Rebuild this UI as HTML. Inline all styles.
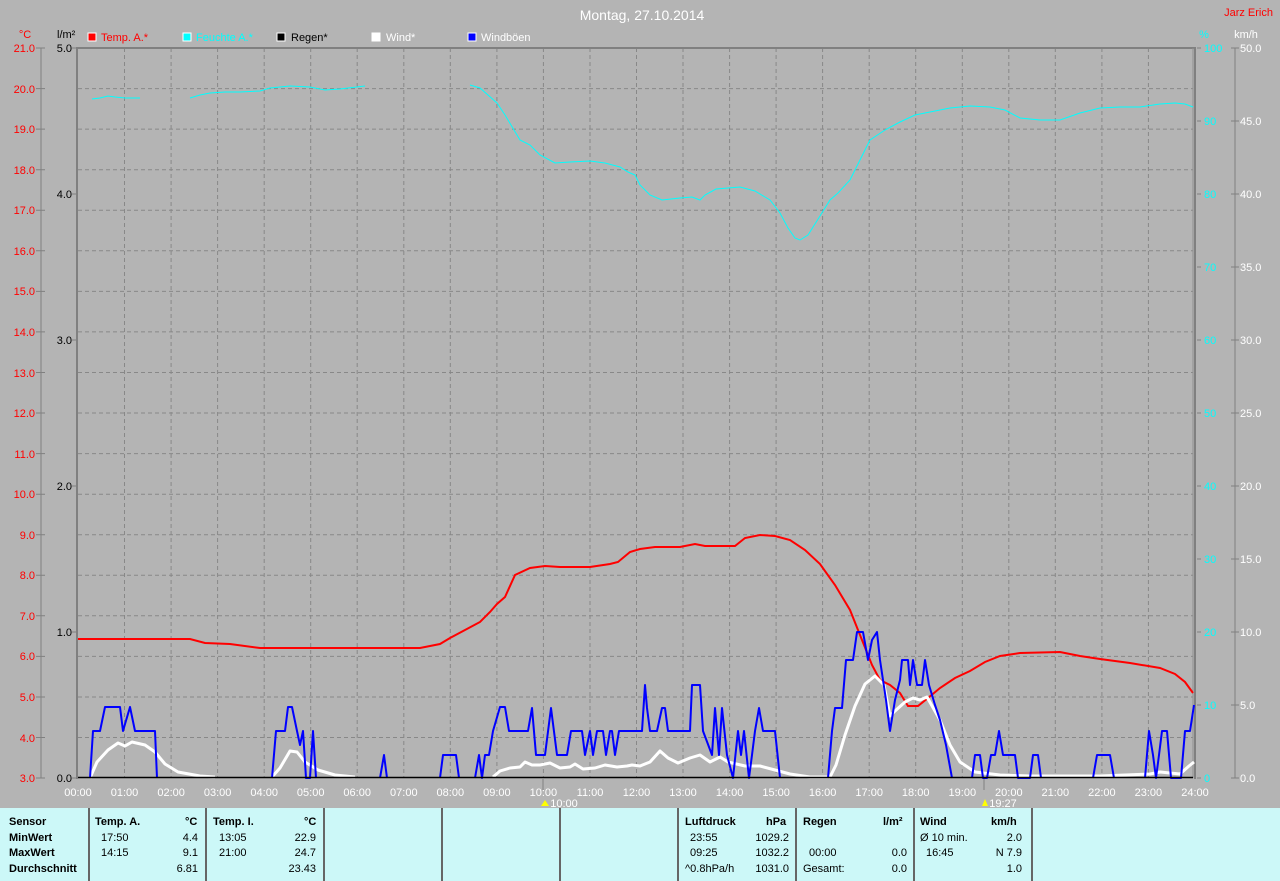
<!DOCTYPE html>
<html><head><meta charset="utf-8"><style>
html,body{margin:0;padding:0;background:#b4b4b4;}
body{width:1280px;height:881px;position:relative;overflow:hidden;font-family:"Liberation Sans",sans-serif;font-size:11px;}
svg{position:absolute;left:0;top:0;}
.tbl{position:absolute;left:0;top:808px;width:1280px;height:73px;background:#ccf8f8;}
.c{position:absolute;top:0;height:73px;border-left:2px solid #666;}
.t{position:absolute;font-size:11px;color:#000;white-space:nowrap;}
.b{font-weight:bold;}
</style></head><body>
<svg width="1280" height="808" viewBox="0 0 1280 808" font-family="Liberation Sans, sans-serif" font-size="11">
<text x="642" y="20" fill="#ffffff" font-size="14" text-anchor="middle">Montag, 27.10.2014</text>
<text x="1273" y="16" fill="#ff0000" text-anchor="end">Jarz Erich</text>
<text x="25" y="38" fill="#ff0000" text-anchor="middle">°C</text>
<text x="57" y="38" fill="#000">l/m²</text>
<text x="1204" y="38" fill="#00ffff" text-anchor="middle">%</text>
<text x="1246" y="38" fill="#fff" text-anchor="middle">km/h</text>
<rect x="88" y="33" width="8" height="8" fill="#f00" stroke="#fff"/><text x="101" y="41" fill="#f00">Temp. A.*</text>
<rect x="183" y="33" width="8" height="8" fill="#0ff" stroke="#fff"/><text x="196" y="41" fill="#0ff">Feuchte A.*</text>
<rect x="277" y="33" width="8" height="8" fill="#000" stroke="#fff"/><text x="291" y="41" fill="#000">Regen*</text>
<rect x="372" y="33" width="8" height="8" fill="#fff" stroke="#fff"/><text x="386" y="41" fill="#fff">Wind*</text>
<rect x="468" y="33" width="8" height="8" fill="#00f" stroke="#fff"/><text x="481" y="41" fill="#fff">Windböen</text>
<g stroke="#888" stroke-dasharray="4,3" stroke-width="1">
<path d="M124.5 48V778M171.1 48V778M217.6 48V778M264.2 48V778M310.7 48V778M357.2 48V778M403.8 48V778M450.3 48V778M496.9 48V778M543.4 48V778M590 48V778M636.5 48V778M683 48V778M729.6 48V778M776.1 48V778M822.6 48V778M869.2 48V778M915.7 48V778M962.3 48V778M1008.8 48V778M1055.3 48V778M1101.9 48V778M1148.4 48V778"/>
<path d="M78 88.6H1193M78 129.1H1193M78 169.7H1193M78 210.2H1193M78 250.8H1193M78 291.4H1193M78 331.9H1193M78 372.5H1193M78 413H1193M78 453.6H1193M78 494.2H1193M78 534.7H1193M78 575.3H1193M78 615.8H1193M78 656.4H1193M78 697H1193M78 737.5H1193"/>
</g>
<path d="M77 48H1196M77 47V779M1195 47V779" stroke="#808080" stroke-width="2" fill="none"/>
<path d="M1193 48V778" stroke="#909090" stroke-width="1"/>
<path d="M41 48V778M36 48H45M36 88.6H45M36 129.1H45M36 169.7H45M36 210.2H45M36 250.8H45M36 291.4H45M36 331.9H45M36 372.5H45M36 413H45M36 453.6H45M36 494.2H45M36 534.7H45M36 575.3H45M36 615.8H45M36 656.4H45M36 697H45M36 737.5H45M36 778H45" stroke="#808080"/>
<path d="M72 48H77M72 194H77M72 340H77M72 486H77M72 632H77M72 778H77" stroke="#808080"/>
<path d="M1197 48H1201M1197 121H1201M1197 194H1201M1197 267H1201M1197 340H1201M1197 413H1201M1197 486H1201M1197 559H1201M1197 632H1201M1197 705H1201M1197 778H1201" stroke="#808080"/>
<path d="M1235 48V778M1231 48H1239M1231 121H1239M1231 194H1239M1231 267H1239M1231 340H1239M1231 413H1239M1231 486H1239M1231 559H1239M1231 632H1239M1231 705H1239M1231 778H1239" stroke="#808080"/>
<path d="M984 779V790M543 779V790" stroke="#808080"/>
<g fill="#ff0000" text-anchor="end">
<text x="35" y="52">21.0</text><text x="35" y="93">20.0</text><text x="35" y="133">19.0</text><text x="35" y="174">18.0</text><text x="35" y="214">17.0</text><text x="35" y="255">16.0</text><text x="35" y="295">15.0</text><text x="35" y="336">14.0</text><text x="35" y="377">13.0</text><text x="35" y="417">12.0</text><text x="35" y="458">11.0</text><text x="35" y="498">10.0</text><text x="35" y="539">9.0</text><text x="35" y="579">8.0</text><text x="35" y="620">7.0</text><text x="35" y="660">6.0</text><text x="35" y="701">5.0</text><text x="35" y="742">4.0</text><text x="35" y="782">3.0</text>
</g>
<g fill="#000" text-anchor="end">
<text x="72" y="52">5.0</text><text x="72" y="198">4.0</text><text x="72" y="344">3.0</text><text x="72" y="490">2.0</text><text x="72" y="636">1.0</text><text x="72" y="782">0.0</text>
</g>
<g fill="#00ffff">
<text x="1204" y="52">100</text><text x="1204" y="125">90</text><text x="1204" y="198">80</text><text x="1204" y="271">70</text><text x="1204" y="344">60</text><text x="1204" y="417">50</text><text x="1204" y="490">40</text><text x="1204" y="563">30</text><text x="1204" y="636">20</text><text x="1204" y="709">10</text><text x="1204" y="782">0</text>
</g>
<g fill="#fff">
<text x="1240" y="52">50.0</text><text x="1240" y="125">45.0</text><text x="1240" y="198">40.0</text><text x="1240" y="271">35.0</text><text x="1240" y="344">30.0</text><text x="1240" y="417">25.0</text><text x="1240" y="490">20.0</text><text x="1240" y="563">15.0</text><text x="1240" y="636">10.0</text><text x="1240" y="709">5.0</text><text x="1240" y="782">0.0</text>
</g>
<g fill="#fff" text-anchor="middle">
<text x="78" y="796">00:00</text><text x="124.5" y="796">01:00</text><text x="171.1" y="796">02:00</text><text x="217.6" y="796">03:00</text><text x="264.2" y="796">04:00</text><text x="310.7" y="796">05:00</text><text x="357.2" y="796">06:00</text><text x="403.8" y="796">07:00</text><text x="450.3" y="796">08:00</text><text x="496.9" y="796">09:00</text><text x="543.4" y="796">10:00</text><text x="590" y="796">11:00</text><text x="636.5" y="796">12:00</text><text x="683" y="796">13:00</text><text x="729.6" y="796">14:00</text><text x="776.1" y="796">15:00</text><text x="822.6" y="796">16:00</text><text x="869.2" y="796">17:00</text><text x="915.7" y="796">18:00</text><text x="962.3" y="796">19:00</text><text x="1008.8" y="796">20:00</text><text x="1055.3" y="796">21:00</text><text x="1101.9" y="796">22:00</text><text x="1148.4" y="796">23:00</text><text x="1195" y="796">24:00</text>
<text x="564" y="807">10:00</text><text x="1003" y="807">19:27</text>
</g>
<path d="M541 806l4-6 4 6z" fill="#ffff00"/><path d="M982 806l3-7 3 7z" fill="#ffff00"/>
<g stroke="#00ffff" stroke-width="1" fill="none">
<polyline points="92,99 100,98 108,96 115,97 125,98 140,98"/>
<polyline points="190,98 200,95 210,93 225,92 240,92 260,91 270,88 290,86 310,87 325,90 340,89 365,86"/>
<polyline points="470,85 480,88 497,103 505,115 520,140 530,145 540,155 555,163 570,162 590,161 605,163 620,167 628,172 635,175 640,185 650,195 662,200 680,198 692,197 700,200 705,195 716,189 740,187 755,191 770,200 780,213 788,228 795,238 800,240 808,235 820,216 830,200 838,193 850,180 870,140 885,130 900,122 915,115 930,112 950,108 970,106 990,107 1005,110 1020,118 1040,120 1060,120 1080,113 1100,108 1120,107 1140,107 1160,104 1175,103 1185,104 1193,107"/>
</g>
<polyline fill="none" stroke="#ff0000" stroke-width="2" points="78,639 190,639 205,643 230,644 260,648 300,648 420,648 440,644 450,638 465,630 480,622 490,612 497,604 505,597 515,575 530,568 545,566 560,567 590,567 610,564 618,562 630,552 640,549 655,547 680,547 695,544 705,546 735,546 745,538 760,535 775,536 790,540 805,550 820,564 835,585 850,610 862,640 872,665 880,680 890,685 900,693 908,706 918,706 928,698 940,688 955,678 970,671 985,662 1000,656 1020,653 1060,652 1080,656 1100,659 1130,663 1160,668 1175,674 1185,682 1193,693"/>
<polyline fill="none" stroke="#ffffff" stroke-width="3" stroke-linejoin="round" points="90,778 97,762 108,750 118,743 125,746 132,742 145,745 155,752 165,764 178,772 200,776 215,777"/>
<polyline fill="none" stroke="#ffffff" stroke-width="3" stroke-linejoin="round" points="272,777 280,768 290,751 297,752 305,762 318,770 335,775 355,777"/>
<polyline fill="none" stroke="#ffffff" stroke-width="3" stroke-linejoin="round" points="493,777 500,771 510,768 520,767 525,762 532,765 540,765 550,763 560,768 570,767 575,764 583,769 595,768 605,765 617,767 627,766 632,765 640,766 650,762 660,751 668,758 678,763 690,758 700,755 710,762 720,757 728,762 745,766 760,766 775,770 790,774 810,777 830,777"/>
<polyline fill="none" stroke="#ffffff" stroke-width="3" stroke-linejoin="round" points="830,777 836,765 845,735 855,706 865,684 875,676 884,685 890,716 895,711 905,702 913,698 920,700 927,697 940,720 950,745 960,762 975,772 1000,775 1030,776 1100,776 1150,774 1160,772 1170,773 1180,774 1189,766 1194,762"/>
<g fill="none" stroke="#0000ff" stroke-width="2" stroke-linejoin="round">
<polyline points="90,778 93,731 100,731 105,707 120,707 123,731 130,707 135,731 155,731 157,778"/>
<polyline points="272,778 276,731 285,731 288,707 292,707 297,731 300,745 303,731 306,778 310,778 313,731 316,778"/>
<polyline points="380,778 384,755 387,778"/>
<polyline points="440,778 443,755 456,755 459,778"/>
<polyline points="475,778 479,755 482,778 485,755 489,755 493,731 500,707 505,707 509,731 528,731 532,708 536,755 545,755 551,708 557,755 567,755 571,731 582,731 585,755 590,731 593,755 597,731 603,731 606,755 610,731 612,731 615,755 619,731 642,731 645,685 647,708 650,731 657,731 662,708 665,708 668,731 690,731 692,685 700,685 703,731 712,755 715,708 719,755 722,708 727,755 733,778 738,731 741,755 744,731 749,778 752,755 755,731 759,708 763,731 775,731 780,778"/>
<polyline points="828,778 832,731 835,708 842,708 846,660 853,660 857,632 863,632 868,660 872,640 877,632 880,660 886,700 890,731 895,700 900,680 902,660 908,660 910,685 913,660 917,685 922,685 925,660 929,685 935,705 940,720 946,745 952,778"/>
<polyline points="972,778 975,755 980,755 983,778 987,778 991,755 995,755 999,731 1003,755 1015,755 1018,778 1030,778 1033,755 1038,755 1041,778"/>
<polyline points="1093,778 1097,755 1110,755 1114,778"/>
<polyline points="1145,778 1149,731 1153,755 1156,778 1159,755 1162,731 1167,731 1171,778 1181,778 1185,731 1190,731 1194,705"/>
</g>
<path d="M78 777.5H1193" stroke="#000" stroke-width="1.5"/>
</svg>
<div class="tbl">
<div class="c" style="left:88px"></div><div class="c" style="left:205px"></div><div class="c" style="left:323px"></div><div class="c" style="left:441px"></div><div class="c" style="left:559px"></div><div class="c" style="left:677px"></div><div class="c" style="left:795px"></div><div class="c" style="left:913px"></div><div class="c" style="left:1031px"></div>
<div class="t b" style="left:9px;top:8px">Sensor</div>
<div class="t b" style="left:9px;top:24px">MinWert</div>
<div class="t b" style="left:9px;top:39px">MaxWert</div>
<div class="t b" style="left:9px;top:55px">Durchschnitt</div>
<div class="t b" style="left:95px;top:8px">Temp. A.</div><div class="t b" style="left:185px;top:8px">°C</div>
<div class="t" style="left:101px;top:24px">17:50</div><div class="t" style="right:1082px;top:24px">4.4</div>
<div class="t" style="left:101px;top:39px">14:15</div><div class="t" style="right:1082px;top:39px">9.1</div>
<div class="t" style="right:1082px;top:55px">6.81</div>
<div class="t b" style="left:213px;top:8px">Temp. I.</div><div class="t b" style="left:304px;top:8px">°C</div>
<div class="t" style="left:219px;top:24px">13:05</div><div class="t" style="right:964px;top:24px">22.9</div>
<div class="t" style="left:219px;top:39px">21:00</div><div class="t" style="right:964px;top:39px">24.7</div>
<div class="t" style="right:964px;top:55px">23.43</div>
<div class="t b" style="left:685px;top:8px">Luftdruck</div><div class="t b" style="left:766px;top:8px">hPa</div>
<div class="t" style="left:690px;top:24px">23:55</div><div class="t" style="right:491px;top:24px">1029.2</div>
<div class="t" style="left:690px;top:39px">09:25</div><div class="t" style="right:491px;top:39px">1032.2</div>
<div class="t" style="left:685px;top:55px">^0.8hPa/h</div><div class="t" style="right:491px;top:55px">1031.0</div>
<div class="t b" style="left:803px;top:8px">Regen</div><div class="t b" style="left:883px;top:8px">l/m²</div>
<div class="t" style="left:809px;top:39px">00:00</div><div class="t" style="right:373px;top:39px">0.0</div>
<div class="t" style="left:803px;top:55px">Gesamt:</div><div class="t" style="right:373px;top:55px">0.0</div>
<div class="t b" style="left:920px;top:8px">Wind</div><div class="t b" style="left:991px;top:8px">km/h</div>
<div class="t" style="left:920px;top:24px">Ø 10 min.</div><div class="t" style="right:258px;top:24px">2.0</div>
<div class="t" style="left:926px;top:39px">16:45</div><div class="t" style="right:258px;top:39px">N 7.9</div>
<div class="t" style="right:258px;top:55px">1.0</div>
</div>
</body></html>
